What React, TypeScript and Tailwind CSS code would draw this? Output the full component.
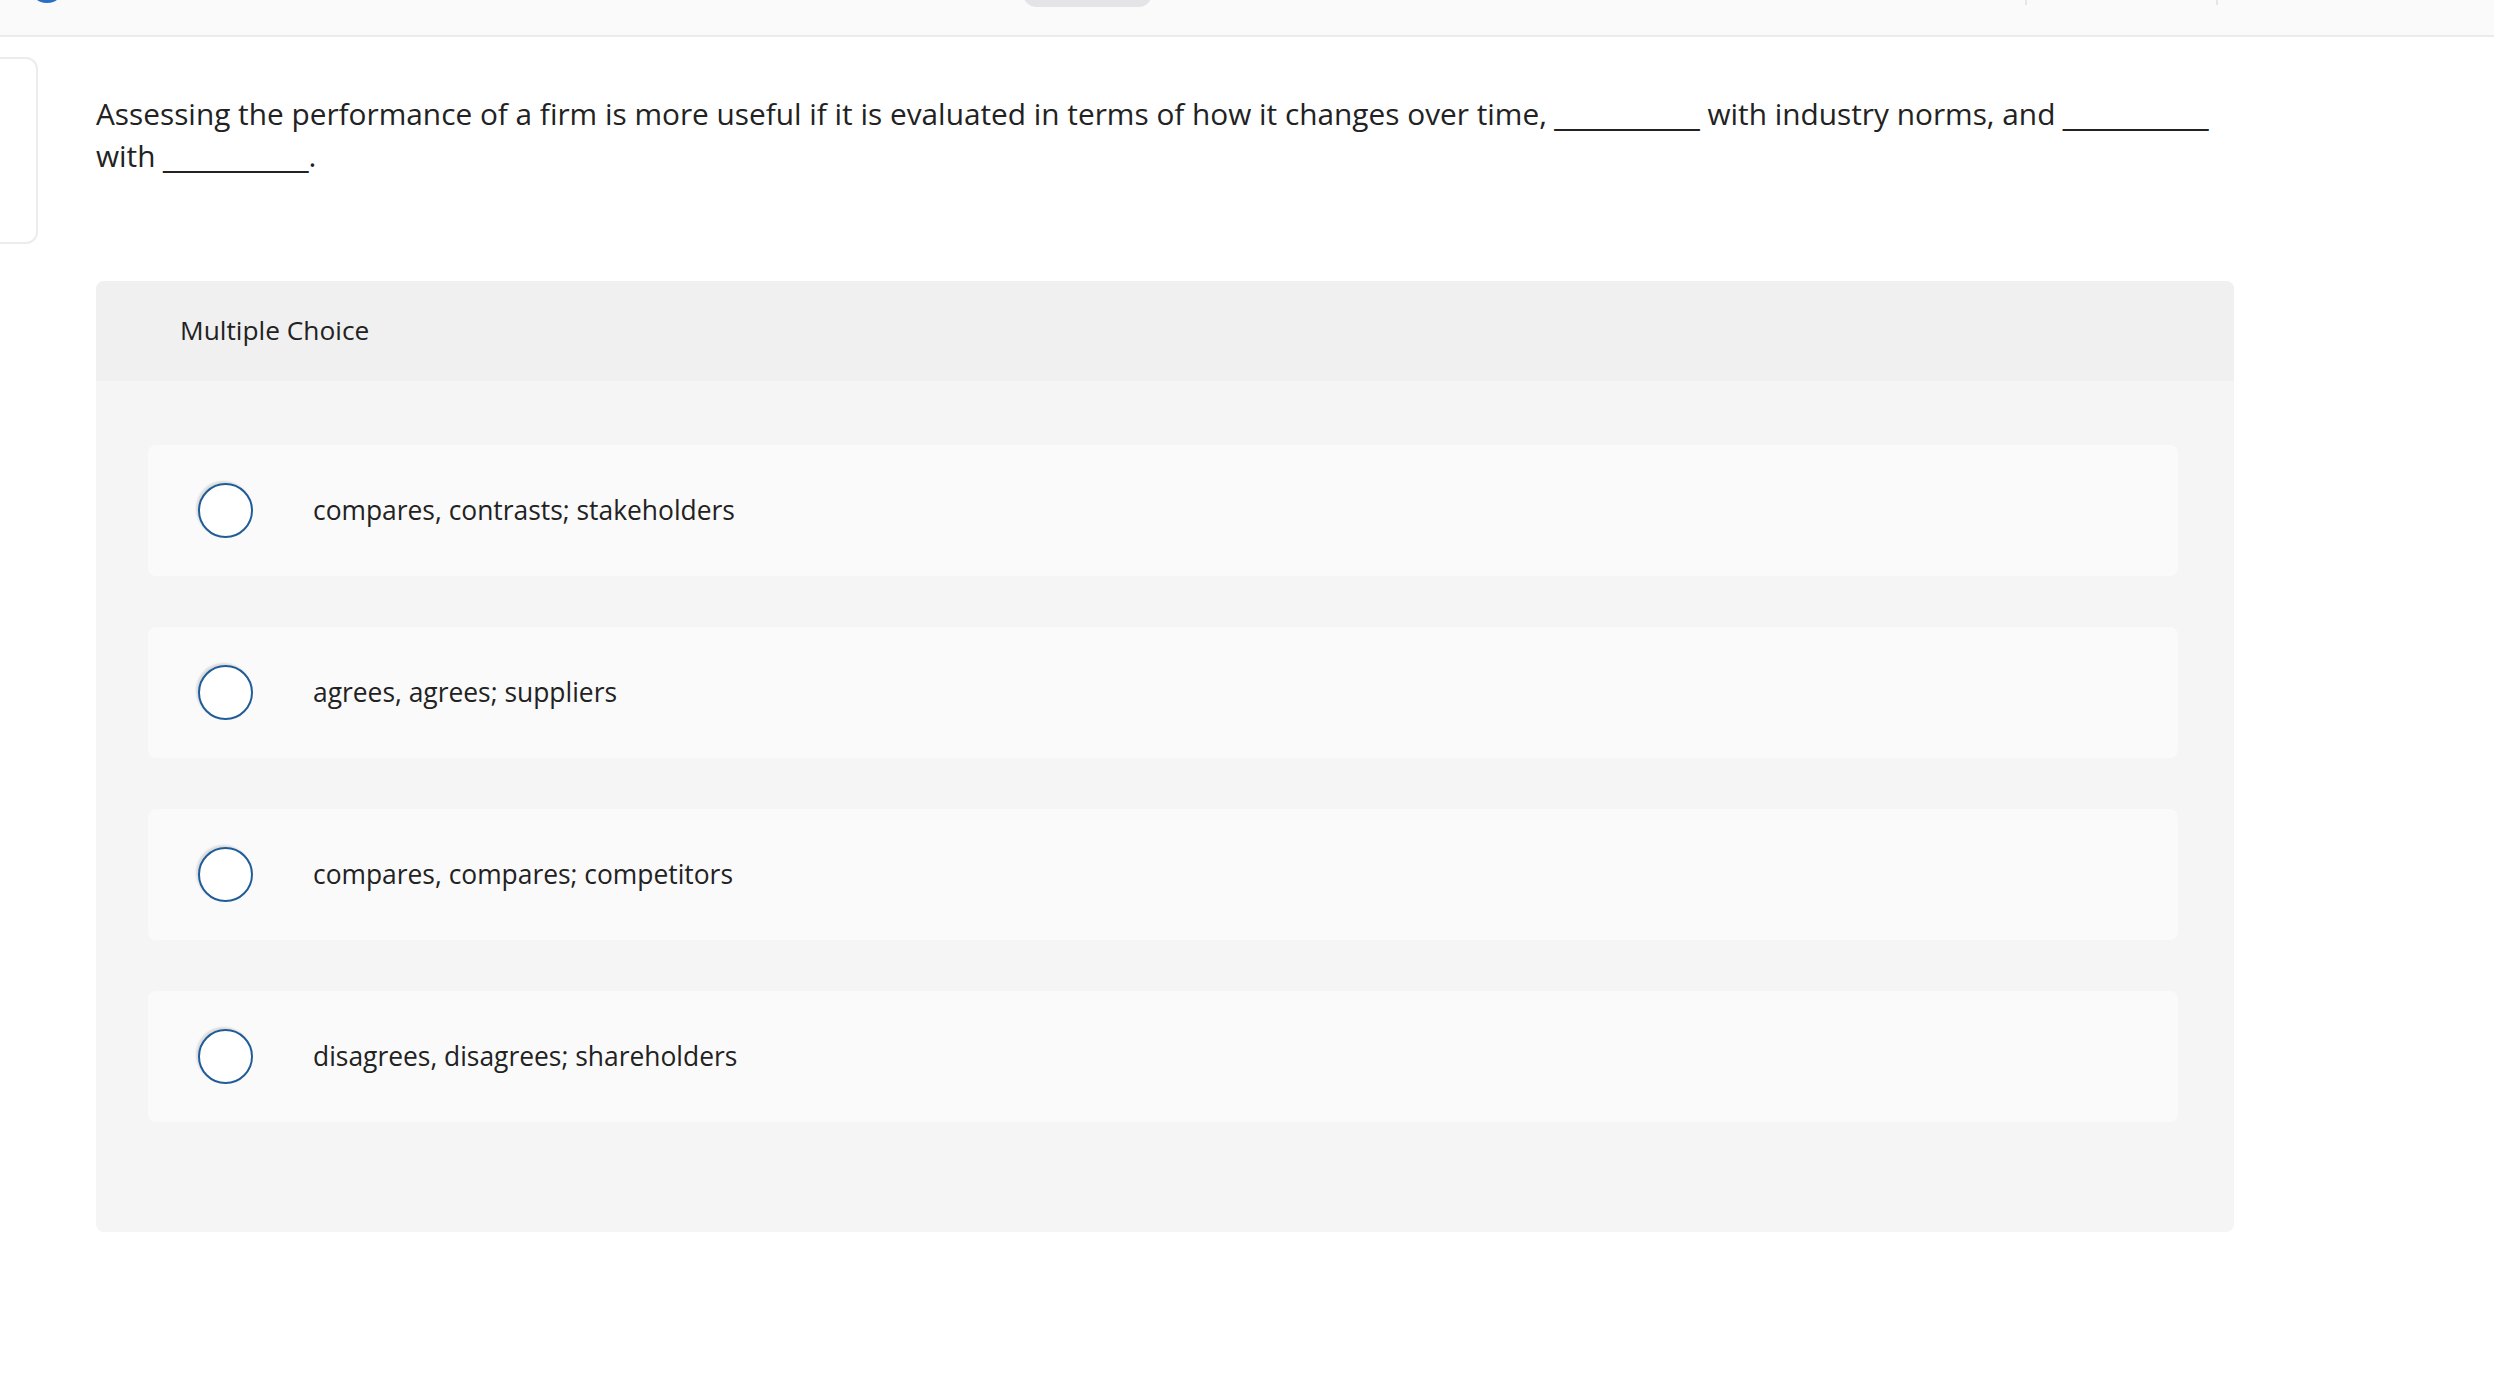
import React from 'react';

const OPTIONS = [
  'compares, contrasts; stakeholders',
  'agrees, agrees; suppliers',
  'compares, compares; competitors',
  'disagrees, disagrees; shareholders',
];

function Blank() {
  return <span className="font-['Liberation_Sans',sans-serif] text-[29px] leading-none">_________</span>;
}

export default function App() {
  return (
    <div className="w-full h-[1397px] bg-white overflow-hidden font-['Open_Sans',sans-serif] text-[#222] [font-variant-ligatures:none]">
      {/* top bar, mostly scrolled out of view */}
      <div className="relative h-[37px] bg-[#fafafa] border-b-2 border-[#ebebeb]">
        <div className="absolute left-[29px] top-[-33px] w-[36px] h-[36px] rounded-full bg-[#2a6fc4]" />
        <div className="absolute left-[1023px] top-[-20px] w-[129px] h-[27px] rounded-full bg-[#e4e3e6]" />
        <div className="absolute left-[2025px] top-0 w-[2px] h-[5px] bg-[#e6e6e6]" />
        <div className="absolute left-[2216px] top-0 w-[2px] h-[5px] bg-[#e6e6e6]" />
      </div>

      <div className="flex">
        {/* side card peeking from the left */}
        <div className="w-[38px] h-[187px] mt-[20px] shrink-0 rounded-r-xl border-2 border-l-0 border-[#ececec] bg-white" />

        <div className="ml-[58px] w-[2138px] pt-[56px]">
          <p className="text-[29.8px] leading-[42px]">
            Assessing the performance of a firm is more useful if it is evaluated in terms of how it changes over time, <Blank /> with industry norms, and <Blank /> with <Blank />.
          </p>

          <div className="mt-[104px] rounded-lg overflow-hidden bg-[#f5f5f5]">
            <div className="h-[100px] bg-[#f0f0f0] flex items-center pl-[84px] text-[26.3px]">Multiple Choice</div>
            <div className="pl-[52px] pr-[56px] pt-[64px] pb-[110px] flex flex-col gap-[51px]">
              {OPTIONS.map((o) => (
                <div key={o} className="h-[131px] rounded-lg bg-[#fafafa] flex items-center pl-[50px]">
                  <span className="w-[55px] h-[55px] shrink-0 rounded-full border-[2.5px] border-[#205c98] bg-white shadow-[-2px_-2px_2px_rgba(0,0,0,0.12)]" />
                  <span className="ml-[60px] text-[26.4px]">{o}</span>
                </div>
              ))}
            </div>
          </div>
        </div>
      </div>
    </div>
  );
}
